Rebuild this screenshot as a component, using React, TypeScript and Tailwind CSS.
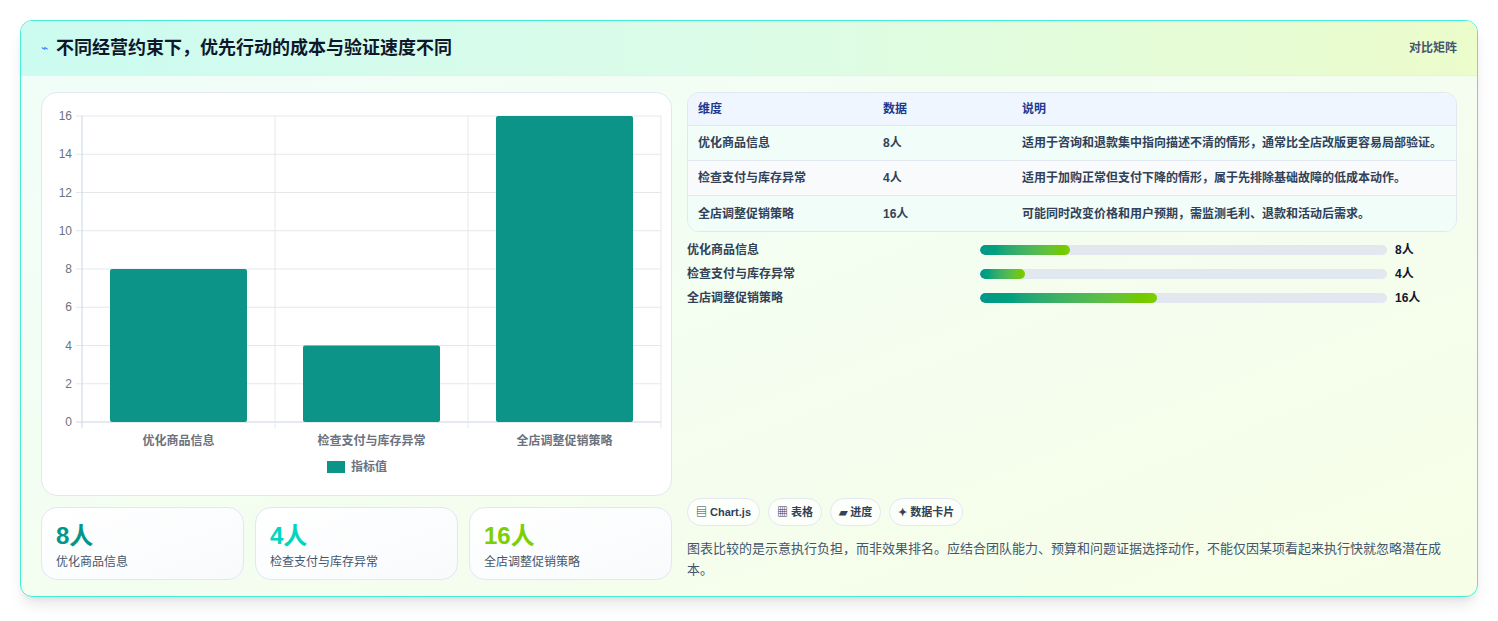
const rows = [
  { name: "优化商品信息", v: 8, desc: "适用于咨询和退款集中指向描述不清的情形，通常比全店改版更容易局部验证。", pct: 22 },
  { name: "检查支付与库存异常", v: 4, desc: "适用于加购正常但支付下降的情形，属于先排除基础故障的低成本动作。", pct: 11 },
  { name: "全店调整促销策略", v: 16, desc: "可能同时改变价格和用户预期，需监测毛利、退款和活动后需求。", pct: 43.5 },
];

function Chart() {
  const x0 = 40, x1 = 619, yTop = 23, yBot = 329;
  const ticks = [0, 2, 4, 6, 8, 10, 12, 14, 16];
  const y = (v: number) => yBot - (v / 16) * (yBot - yTop);
  const cw = (x1 - x0) / 3;
  return (
    <svg width="631" height="402" className="block">
      {ticks.map((t) => (
        <g key={t}>
          <line x1={x0 - 6} x2={x1} y1={y(t)} y2={y(t)} stroke={t === 0 ? "#cbd5e1" : "#e5e7eb"} />
          <text x={x0 - 10} y={y(t) + 4} textAnchor="end" fontSize="12" fill="#6b7280">{t}</text>
        </g>
      ))}
      {[0, 1, 2, 3].map((i) => (
        <line key={i} x1={x0 + i * cw} x2={x0 + i * cw} y1={yTop} y2={yBot + 6} stroke={i === 0 ? "#cbd5e1" : "#e5e7eb"} />
      ))}
      {rows.map((r, i) => (
        <g key={r.name}>
          <rect x={x0 + i * cw + 28} y={y(r.v)} width={cw - 56} height={yBot - y(r.v)} fill="#0d9488" rx="2" />
          <text x={x0 + i * cw + cw / 2} y={352} textAnchor="middle" fontSize="12" fontWeight="bold" fill="#6b7280">{r.name}</text>
        </g>
      ))}
      <rect x="285" y="368" width="18" height="12" fill="#0d9488" />
      <text x="309" y="378" fontSize="12" fontWeight="bold" fill="#6b7280">指标值</text>
    </svg>
  );
}

export default function App() {
  return (
    <div className="w-[1498px] h-[621px] bg-white pt-5 px-5 text-slate-800" style={{ fontFamily: '"Liberation Sans","Noto Sans CJK SC",sans-serif' }}>
      <div className="rounded-xl border border-teal-300 shadow-lg bg-gradient-to-br from-[#f0fdf9] to-[#f7fee7] overflow-hidden">
        <div className="h-[55px] flex items-center justify-between px-5 bg-gradient-to-r from-[#ccfbf1] via-[#dcfce7] to-[#ecfccb] border-b border-teal-100">
          <div className="flex items-center gap-2">
            <span className="text-blue-500 text-xs">⌁</span>
            <h1 className="text-lg font-bold text-slate-900">不同经营约束下，优先行动的成本与验证速度不同</h1>
          </div>
          <span className="text-xs text-slate-600 font-bold">对比矩阵</span>
        </div>
        <div className="flex gap-[15px] px-5 pt-4 pb-4">
          <div className="w-[631px] flex flex-col gap-[11px]">
            <div className="bg-white rounded-2xl border border-slate-200 h-[404px]"><Chart /></div>
            <div className="grid grid-cols-3 gap-[11px]">
              {rows.map((r, i) => (
                <div key={r.name} className="h-[73px] rounded-2xl border border-slate-200 bg-gradient-to-br from-white to-[#f8fafc] px-3.5 pt-3">
                  <div className={`text-2xl font-bold ${i === 0 ? "text-teal-600" : i === 1 ? "text-teal-400" : "text-lime-500"}`}>{r.v}人</div>
                  <div className="text-xs text-slate-600 mt-0.5">{r.name}</div>
                </div>
              ))}
            </div>
          </div>
          <div className="flex-1 flex flex-col justify-between">
            <div>
              <div className="rounded-xl border border-slate-200 overflow-hidden text-xs">
                <div className="grid grid-cols-[185px_139px_1fr] h-[33px] items-center px-2.5 bg-[#eff6ff] text-blue-900 font-bold border-b border-slate-200">
                  <span>维度</span><span>数据</span><span>说明</span>
                </div>
                {rows.map((r, i) => (
                  <div key={r.name} className={`grid grid-cols-[185px_139px_1fr] h-[35px] items-center px-2.5 font-bold text-slate-700 ${i === 1 ? "bg-slate-50" : "bg-[#f0fdf9]"} ${i < 2 ? "border-b border-slate-200" : ""}`}>
                    <span>{r.name}</span><span>{r.v}人</span><span>{r.desc}</span>
                  </div>
                ))}
              </div>
              <div className="mt-2.5 flex flex-col gap-[9px]">
                {rows.map((r) => (
                  <div key={r.name} className="flex items-center text-xs font-bold text-slate-700 h-[15px]">
                    <span className="w-[293px]">{r.name}</span>
                    <div className="w-[407px] h-2.5 rounded-full bg-slate-200 overflow-hidden">
                      <div className="h-full rounded-full bg-gradient-to-r from-teal-600 to-lime-500" style={{ width: `${r.pct}%` }} />
                    </div>
                    <span className="ml-2 text-slate-900">{r.v}人</span>
                  </div>
                ))}
              </div>
            </div>
            <div>
              <div className="flex gap-2 text-[11px] font-bold text-slate-700">
                {["▤ Chart.js", "▦ 表格", "▰ 进度", "✦ 数据卡片"].map((c) => (
                  <span key={c} className="h-7 px-2 flex items-center rounded-full border border-slate-200 bg-white/70">{c}</span>
                ))}
              </div>
              <p className="mt-3 text-[13px] leading-[21px] text-slate-600">图表比较的是示意执行负担，而非效果排名。应结合团队能力、预算和问题证据选择动作，不能仅因某项看起来执行快就忽略潜在成本。</p>
            </div>
          </div>
        </div>
      </div>
    </div>
  );
}
